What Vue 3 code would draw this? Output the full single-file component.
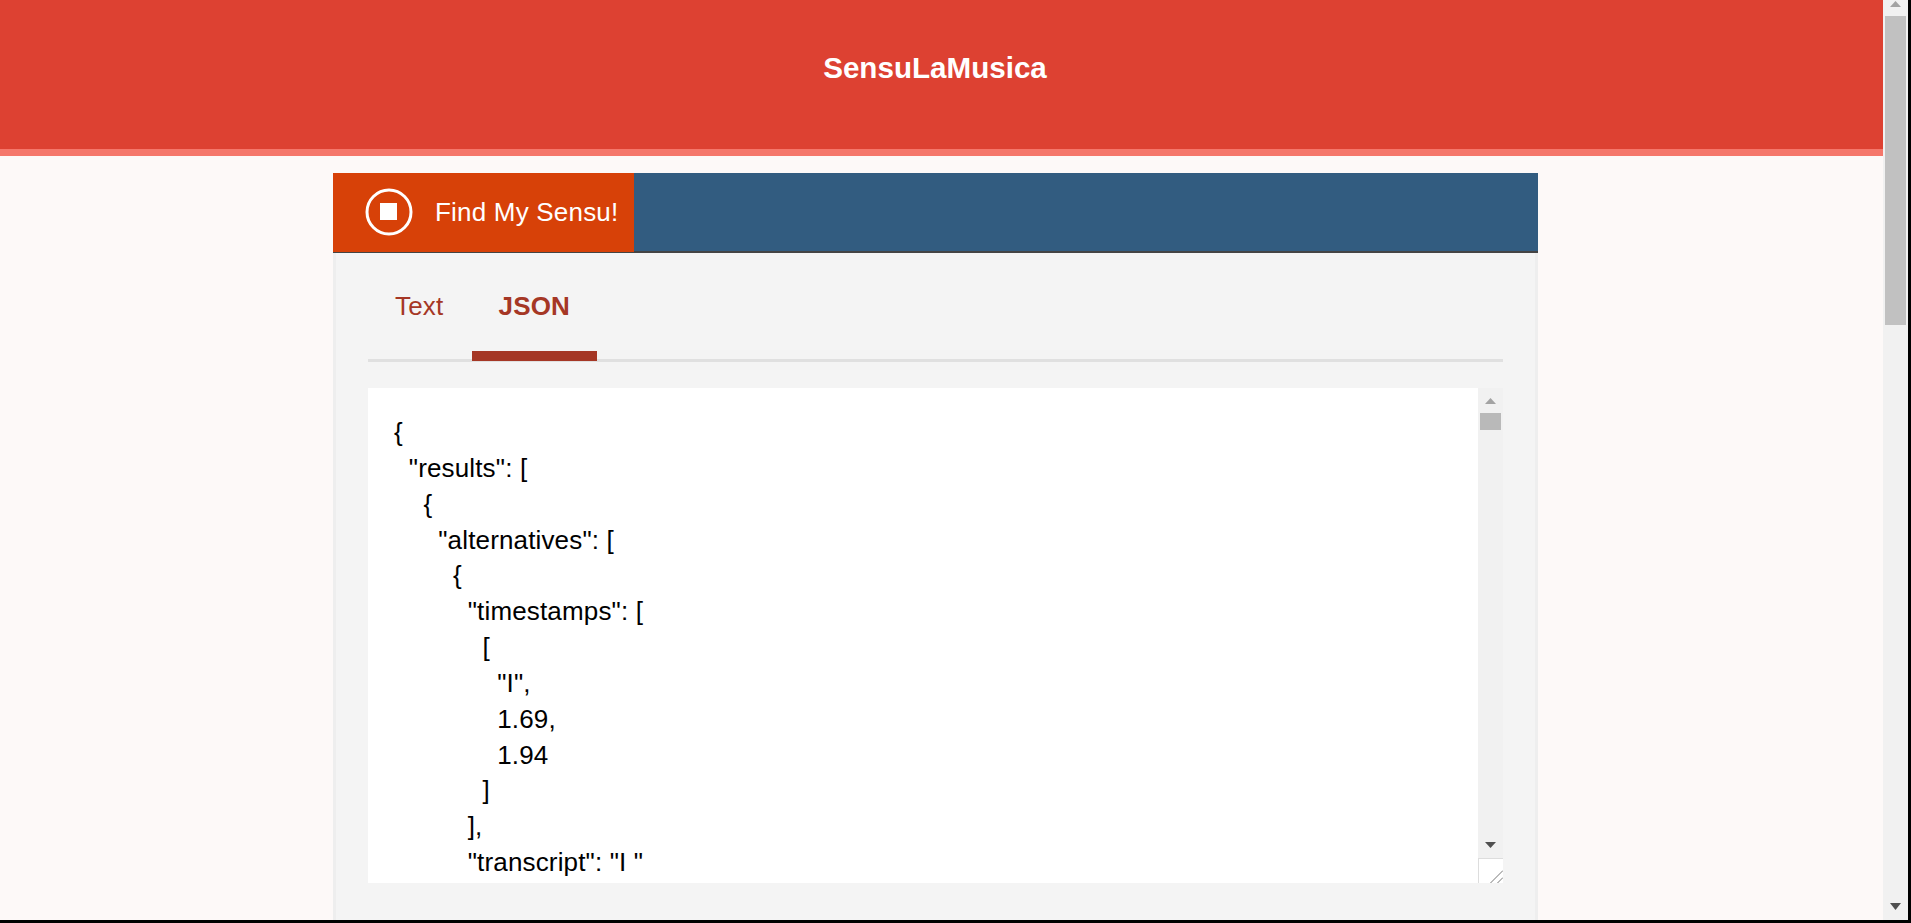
<script setup>
const lines = [
  '{',
  '  "results": [',
  '    {',
  '      "alternatives": [',
  '        {',
  '          "timestamps": [',
  '            [',
  '              "I",',
  '              1.69,',
  '              1.94',
  '            ]',
  '          ],',
  '          "transcript": "I "'
]
const json = lines.join('\n')
</script>

<template>
  <div class="window">
    <div class="page">
      <header class="masthead">
        <h1 class="title">SensuLaMusica</h1>
      </header>
      <main class="container">
        <div class="toolbar">
          <button class="record">
            <svg class="stop" width="48" height="48" viewBox="0 0 48 48">
              <circle cx="24" cy="24" r="22" fill="none" stroke="#fff" stroke-width="3" />
              <rect x="15" y="15" width="17" height="17" fill="#fff" />
            </svg>
            <span>Find My Sensu!</span>
          </button>
        </div>
        <section class="panel">
          <nav class="tabs">
            <a class="tab">Text</a>
            <a class="tab active">JSON</a>
          </nav>
          <div class="output">
            <div class="code">{{ json }}</div>
            <div class="inner-bar">
              <svg class="arrow up-small" width="11" height="6" viewBox="0 0 11 6"><path d="M5.5 0L11 6H0z" fill="#a3a3a3" /></svg>
              <div class="inner-thumb"></div>
              <div class="spacer"></div>
              <svg class="arrow down-small" width="11" height="6" viewBox="0 0 11 6"><path d="M0 0H11L5.5 6z" fill="#505050" /></svg>
              <div class="resizer">
                <svg width="24" height="24" viewBox="0 0 24 24">
                  <path d="M11.5 24L24 11.5M18.5 24L24 18.5" stroke="#777" stroke-width="1" fill="none" />
                </svg>
              </div>
            </div>
          </div>
        </section>
      </main>
    </div>
    <aside class="page-bar">
      <svg class="arrow page-up" width="11" height="6" viewBox="0 0 11 6"><path d="M5.5 0L11 6H0z" fill="#a3a3a3" /></svg>
      <div class="page-thumb"></div>
      <div class="spacer"></div>
      <svg class="arrow page-down" width="11" height="7" viewBox="0 0 11 7"><path d="M0 0H11L5.5 7z" fill="#505050" /></svg>
    </aside>
  </div>
</template>

<style>
html, body { margin: 0; padding: 0; overflow: hidden; }
</style>

<style scoped>
.window {
  display: flex;
  width: 1911px;
  height: 923px;
  box-sizing: border-box;
  border-right: 3px solid #000;
  border-bottom: 3px solid #000;
  font-family: "Liberation Sans", Arial, sans-serif;
  overflow: hidden;
}
.page {
  flex: 1;
  min-width: 0;
  background: #fdf9f8;
  overflow: hidden;
}
.masthead {
  box-sizing: border-box;
  height: 156px;
  background: #dd4132;
  border-bottom: 7px solid #f5776b;
  padding-top: 50px;
  padding-right: 13px;
  text-align: center;
}
.title {
  margin: 0;
  color: #fff;
  font-size: 29.6px;
  line-height: 36px;
  font-weight: 700;
}
.container {
  width: 1205px;
  margin: 17px 0 0 333px;
}
.toolbar {
  display: flex;
  height: 80px;
  box-sizing: border-box;
  background: #325c80;
  border-bottom: 2px solid #444;
}
.record {
  display: flex;
  align-items: center;
  width: 301px;
  height: 79px;
  flex: none;
  box-sizing: border-box;
  padding: 0 0 0 32px;
  border: 0;
  background: #d74108;
  color: #fff;
  font: inherit;
  font-size: 26px;
  letter-spacing: 0.2px;
}
.stop {
  flex: none;
  margin: 0 22px 1px 0;
}
.panel {
  box-sizing: border-box;
  height: 700px;
  padding: 0 32px;
  background: #f4f4f4;
  border: 3px solid #eee;
  border-top: 0;
}
.tabs {
  display: flex;
  border-bottom: 3px solid #e0e0e0;
}
.tab {
  padding: 35px 27px 27px;
  margin-bottom: -2px;
  border-bottom: 10px solid transparent;
  color: #a53725;
  font-size: 26px;
  letter-spacing: 0.2px;
  line-height: 36px;
}
.tab:first-child {
  padding-right: 28.5px;
}
.tab.active {
  padding: 35px 26.5px 27px;
  font-weight: 700;
  border-bottom-color: #a53725;
}
.output {
  display: flex;
  height: 495px;
  margin-top: 26px;
  background: #fff;
}
.code {
  flex: 1;
  min-width: 0;
  overflow: hidden;
  box-sizing: border-box;
  padding: 27px 25.6px 0 26px;
  white-space: pre;
  color: #000;
  font-size: 26px;
  letter-spacing: 0.15px;
  line-height: 35.84px;
}
.inner-bar,
.page-bar {
  display: flex;
  flex: none;
  flex-direction: column;
  align-items: center;
  width: 25px;
  background: #f1f1f1;
}
.arrow { flex: none; display: block; }
.up-small { margin-top: 10px; }
.inner-thumb {
  width: 21px;
  height: 17px;
  margin-top: 9px;
  background: #b9b9b9;
}
.spacer { flex: 1; }
.down-small { margin-bottom: 10px; }
.resizer {
  width: 25px;
  height: 25px;
  box-sizing: border-box;
  background: #fff;
  border-left: 1px solid #ddd;
  border-top: 1px solid #ddd;
}
.resizer svg { display: block; }
.page-up { margin-top: 1px; }
.page-thumb {
  width: 21px;
  height: 309px;
  margin-top: 9px;
  background: #c1c1c1;
}
.page-down { margin-bottom: 10px; }
</style>
